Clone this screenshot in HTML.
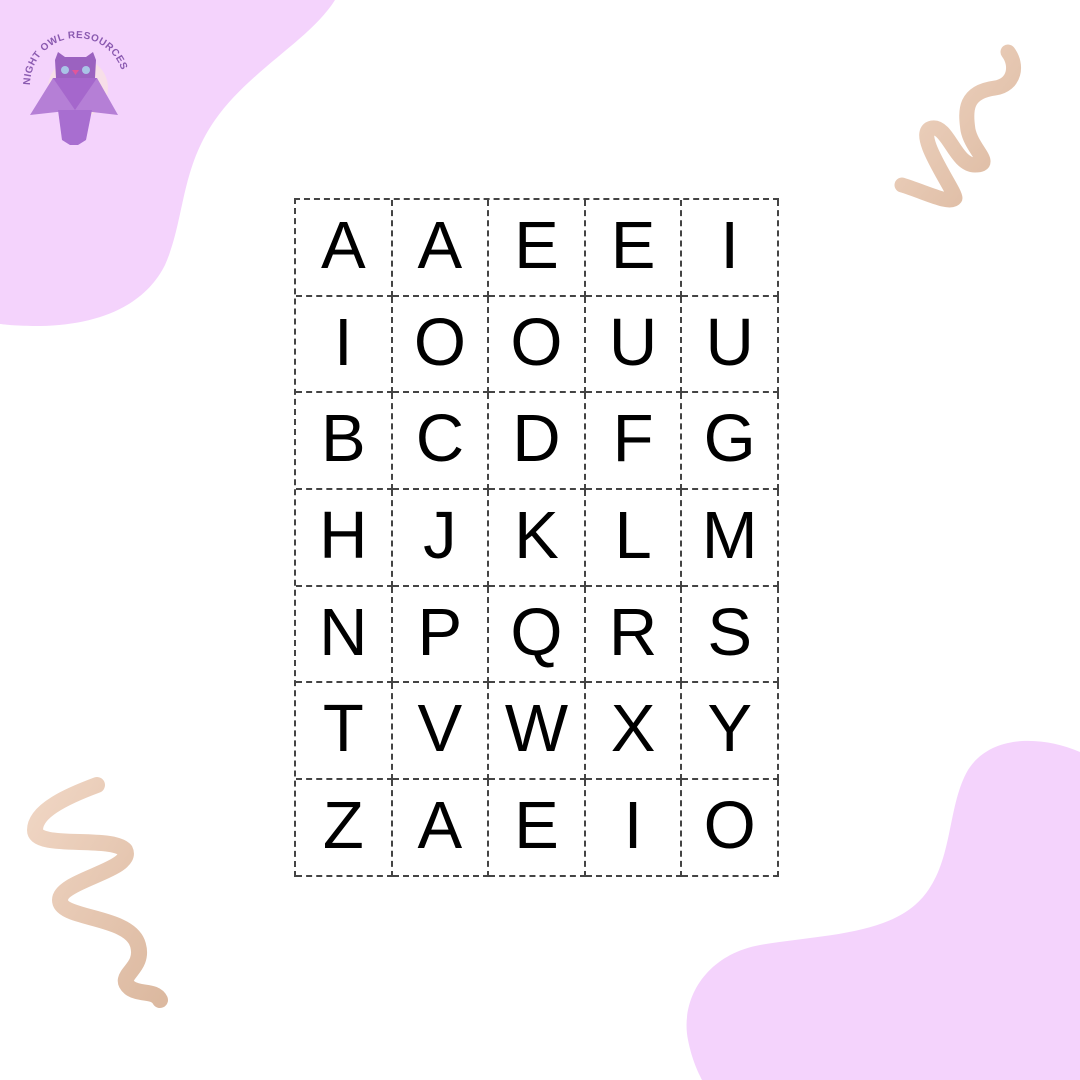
<!DOCTYPE html>
<html><head><meta charset="utf-8"><style>
html,body{margin:0;padding:0;background:#fff;}
body{width:1080px;height:1080px;position:relative;overflow:hidden;font-family:"Liberation Sans",sans-serif;}
svg.bg{position:absolute;left:0;top:0;}
.grid{position:absolute;left:294px;top:198px;display:grid;grid-template-columns:repeat(5,96.6px);grid-template-rows:repeat(7,96.7px);border-left:2px dashed #444;border-top:2px dashed #444;}
.grid div{border-right:2px dashed #444;border-bottom:2px dashed #444;display:flex;align-items:center;justify-content:center;font-size:67px;color:#000;line-height:1;padding-bottom:4px;box-sizing:border-box;}
</style></head><body>
<svg class="bg" width="1080" height="1080" viewBox="0 0 1080 1080">
<defs><linearGradient id="sq" x1="0" y1="0" x2="1" y2="1"><stop offset="0" stop-color="#f0d6c4"/><stop offset="1" stop-color="#dcb9a0"/></linearGradient></defs>
<path d="M0 0 H335 C310 40 250 70 215 120 C180 170 185 220 165 265 C145 305 100 325 40 326 C20 326 8 325 0 324 Z" fill="#f4d3fc"/>
<path d="M1080 752 C1040 735 990 735 968 770 C945 810 955 870 915 905 C880 935 820 935 760 945 C705 955 680 1000 688 1040 C692 1060 698 1072 702 1080 H1080 Z" fill="#f4d3fc"/>
<path d="M1008 52 C1018 65 1015 85 995 88 C965 92 965 110 968 130 C972 150 995 165 975 165 C955 165 948 125 932 128 C912 132 955 190 955 198 C950 205 925 192 902 185" fill="none" stroke="url(#sq)" stroke-width="15" stroke-linecap="round" stroke-linejoin="round"/>
<path d="M97 785 C70 795 35 810 35 830 C35 850 110 835 125 850 C135 870 60 880 60 900 C60 920 130 915 138 945 C145 970 115 975 130 988 C140 995 155 990 160 1000" fill="none" stroke="url(#sq)" stroke-width="16" stroke-linecap="round" stroke-linejoin="round"/>
<g>
<circle cx="78" cy="88" r="30" fill="#f7dfe8"/>
<path id="arc" d="M30 85 A47 47 0 0 1 124 85" fill="none"/>
<text font-size="10" font-weight="bold" fill="#8a5ab0" font-family="Liberation Sans,sans-serif" letter-spacing="0.5"><textPath href="#arc">NIGHT OWL RESOURCES</textPath></text>
<path d="M55 60 L58 52 L65 57 H86 L93 52 L96 60 L95 78 H56 Z" fill="#9b62c0"/>
<circle cx="65" cy="70" r="4" fill="#a9c4e6"/><circle cx="86" cy="70" r="4" fill="#a9c4e6"/>
<path d="M72 70 L79 70 L75.5 75Z" fill="#e0569a"/>
<path d="M53 78 L97 78 L118 115 L75 110 L30 115 Z" fill="#b57fd6"/>
<path d="M53 78 L75 110 L97 78 Z" fill="#a567cc"/>
<path d="M58 110 H92 L86 140 L78 145 H70 L62 140 Z" fill="#a86ed0"/>
</g>
</svg>
<div class="grid">
<div>A</div><div>A</div><div>E</div><div>E</div><div>I</div>
<div>I</div><div>O</div><div>O</div><div>U</div><div>U</div>
<div>B</div><div>C</div><div>D</div><div>F</div><div>G</div>
<div>H</div><div>J</div><div>K</div><div>L</div><div>M</div>
<div>N</div><div>P</div><div>Q</div><div>R</div><div>S</div>
<div>T</div><div>V</div><div>W</div><div>X</div><div>Y</div>
<div>Z</div><div>A</div><div>E</div><div>I</div><div>O</div>
</div>
</body></html>
